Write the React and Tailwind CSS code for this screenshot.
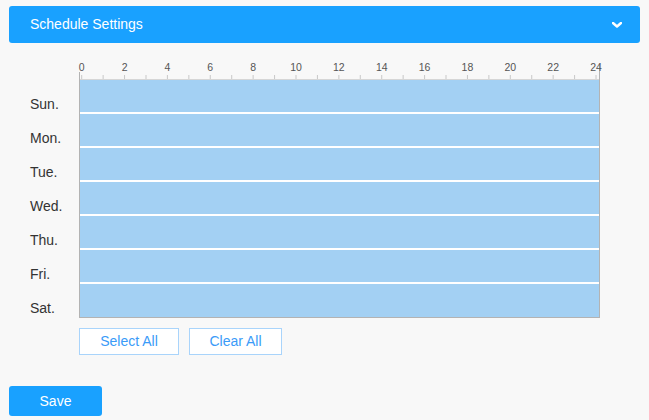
const DAYS = ['Sun.', 'Mon.', 'Tue.', 'Wed.', 'Thu.', 'Fri.', 'Sat.'];

// hour ruler drawn above the schedule grid
const Ruler = () => {
  const w = 521;
  const start = 2.7;
  const step = 21.43;
  const hours = Array.from({ length: 25 }, (_, i) => i);
  return (
    <svg width={w} height="19" className="block overflow-visible">
      <line x1="0" y1="18.5" x2={w} y2="18.5" stroke="#d6d6d6" strokeWidth="1" />
      <line x1="0.5" y1="11" x2="0.5" y2="19" stroke="#b3b3b3" strokeWidth="1" />
      <line x1={w - 0.5} y1="4" x2={w - 0.5} y2="19" stroke="#b3b3b3" strokeWidth="1" />
      {hours.map((h) => (
        <line
          key={h}
          x1={start + h * step}
          y1="14"
          x2={start + h * step}
          y2="18"
          stroke="#c8c8c8"
          strokeWidth="1"
        />
      ))}
      {hours
        .filter((h) => h % 2 === 0)
        .map((h) => (
          <text
            key={h}
            x={start + h * step}
            y="10"
            textAnchor="middle"
            fontSize="10.5"
            fill="#555"
            fontFamily="'Liberation Sans', Arial, sans-serif"
          >
            {h}
          </text>
        ))}
    </svg>
  );
};

export default function App() {
  return (
    <div className="min-h-[420px] bg-[#f8f8f8] px-[9px] pt-[6px] font-['Liberation_Sans',Arial,sans-serif]">
      {/* Header */}
      <div className="flex h-[37px] items-center justify-between rounded-[3px] bg-[#19a1ff] pl-[21px] pr-[18px] text-[14px] text-white">
        <span>Schedule Settings</span>
        <svg width="10" height="6" viewBox="0 0 10 6">
          <path d="M1 1l4 3.5L9 1" fill="none" stroke="white" strokeWidth="2.4" strokeLinecap="round" strokeLinejoin="round" />
        </svg>
      </div>

      {/* Schedule */}
      <div className="mt-[18px] flex">
        <div className="w-[70px] pt-[19px]">
          {DAYS.map((d) => (
            <div key={d} className="flex h-[34px] items-center pl-[21px] pt-[14px] text-[14px] text-[#333]">
              {d}
            </div>
          ))}
        </div>
        <div className="w-[521px]">
          <Ruler />
          <div className="flex flex-col gap-[2px] border-x border-b border-[#b3b3b3] bg-white">
            {DAYS.map((d, i) => (
              <div key={d} className={i === DAYS.length - 1 ? 'h-[33px] bg-[#a3d0f3]' : 'h-[32px] bg-[#a3d0f3]'} />
            ))}
          </div>
          <div className="mt-[10px] flex gap-[10px]">
            <button className="h-[27px] w-[100px] border border-[#a9d4fb] bg-white text-[14px] text-[#3a9bf8]">
              Select All
            </button>
            <button className="h-[27px] w-[93px] border border-[#a9d4fb] bg-white text-[14px] text-[#3a9bf8]">
              Clear All
            </button>
          </div>
        </div>
      </div>

      <button className="mt-[31px] h-[30px] w-[93px] rounded-[3px] bg-[#19a1ff] text-[14px] text-white">
        Save
      </button>
    </div>
  );
}
